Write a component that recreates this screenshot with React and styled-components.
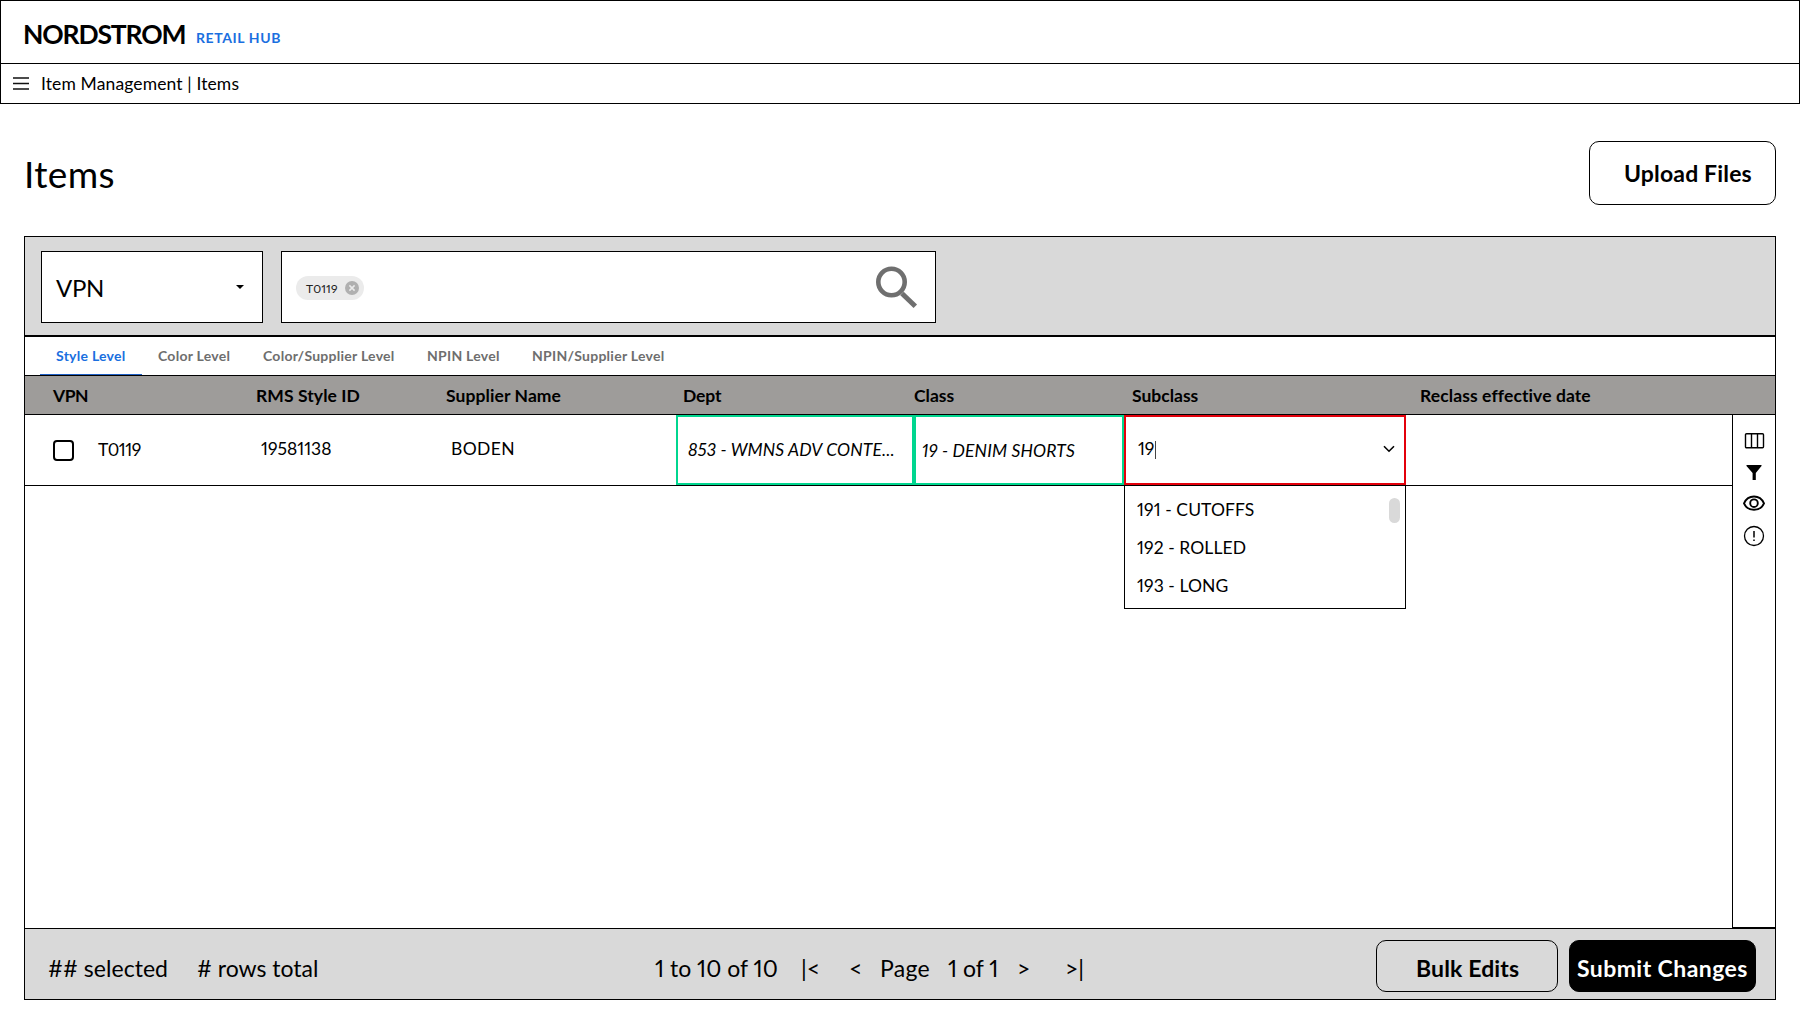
import React from "react";
import styled, { createGlobalStyle } from "styled-components";

const GlobalStyle = createGlobalStyle`
  * {
    box-sizing: border-box;
  }
  body {
    margin: 0;
    background: #fff;
    color: #000;
    font-family: Lato, "Open Sans", sans-serif;
    font-size: 17.5px;
    font-variant-numeric: proportional-nums;
  }
  button {
    font-family: inherit;
    color: inherit;
  }
`;

const Page = styled.div`
  width: 1800px;
  height: 1024px;
`;

const Text = styled.span`
  white-space: pre;
  letter-spacing: ${({ $ls }) => $ls || 0}px;
`;

/* header */
const Header = styled.header`
  height: 104px;
  border: 1px solid #000;
`;
const Brand = styled.div`
  height: 63px;
  border-bottom: 1px solid #000;
  padding: 3px 0 0 22px;
  display: flex;
  align-items: flex-start;
`;
const Logo = styled.span`
  width: 173px;
  line-height: 60px;
  font-size: 26.5px;
  font-weight: 700;
  letter-spacing: -1.15px;
`;
const Product = styled.span`
  padding-top: 5px;
  line-height: 58px;
  font-size: 14px;
  font-weight: 700;
  letter-spacing: 0.6px;
  color: #1a6fe0;
`;
const Crumbs = styled.nav`
  height: 39px;
  padding-left: 12px;
  display: flex;
  align-items: center;
  column-gap: 12px;
`;
const MenuIcon = styled.svg`
  width: 16px;
  height: 13px;
`;

/* title */
const TitleRow = styled.div`
  height: 132px;
  padding: 6px 24px 0 24px;
  display: flex;
  align-items: center;
  justify-content: space-between;
`;
const Title = styled.h1`
  margin: 0;
  font-size: 37px;
  font-weight: 400;
  letter-spacing: 0.4px;
`;
const Button = styled.button`
  height: ${({ $height }) => $height}px;
  width: ${({ $width }) => $width}px;
  padding: ${({ $pad }) => $pad};
  border: 1px solid #000;
  border-radius: 10px;
  background: ${({ $dark }) => ($dark ? "#000" : "transparent")};
  color: ${({ $dark }) => ($dark ? "#fff" : "#000")};
  font-size: 23px;
  font-weight: 700;
  letter-spacing: ${({ $ls }) => $ls}px;
  text-align: left;
  white-space: nowrap;
`;

/* panel */
const Panel = styled.main`
  margin-left: 24px;
  width: 1752px;
  height: 764px;
  border: 1px solid #000;
  display: flex;
  flex-direction: column;
`;
const SearchBar = styled.div`
  height: 100px;
  padding: 14px 16px 0;
  border-bottom: 2px solid #000;
  background: #d9d9d9;
  display: flex;
  column-gap: 18px;
`;
const Select = styled.div`
  width: 222px;
  height: 72px;
  padding: 0 18px 0 14px;
  border: 1px solid #000;
  background: #fff;
  display: flex;
  align-items: center;
  justify-content: space-between;
  font-size: 24px;
`;
const Caret = styled.span`
  border: 4.5px solid transparent;
  border-top-color: #000;
  border-bottom: 0;
`;
const SearchBox = styled.div`
  width: 655px;
  height: 72px;
  padding: 0 12px 0 14px;
  border: 1px solid #000;
  background: #fff;
  display: flex;
  align-items: center;
  justify-content: space-between;
`;
const Chip = styled.div`
  width: 68px;
  height: 24px;
  margin-top: 2px;
  padding: 0 5px 0 10px;
  border-radius: 12px;
  background: #ebebeb;
  color: #222;
  display: flex;
  align-items: center;
  justify-content: space-between;
  font-size: 12px;
`;

const Tabs = styled.div`
  height: 39px;
  padding-left: 15px;
  border-bottom: 1px solid #000;
  display: flex;
`;
const Tab = styled.div`
  width: ${({ $width }) => $width}px;
  padding-left: 16px;
  font-size: 14px;
  font-weight: 700;
  line-height: 38px;
  white-space: nowrap;
  letter-spacing: 0.26px;
  color: ${({ $active }) => ($active ? "#1a6fe0" : "#6e6e6e")};
  box-shadow: ${({ $active }) => ($active ? "inset 0 -1px #1f5fc4" : "none")};
`;

const columns = "228px 190px 233px 238px 210px 282px 1fr";

const HeadRow = styled.div`
  height: 39px;
  background: #9e9c9a;
  border-bottom: 1px solid #000;
  display: grid;
  grid-template-columns: ${columns};
  line-height: 40px;
  font-weight: 700;
`;
const HeadCell = styled.div`
  padding-left: ${({ $left }) => $left}px;
`;
const Body = styled.div`
  flex: 1;
  display: flex;
`;
const Rows = styled.div`
  flex: 1;
`;
const Row = styled.div`
  height: 71px;
  border-bottom: 1px solid #000;
  display: grid;
  grid-template-columns: ${columns};
`;
const Cell = styled.div`
  position: relative;
  height: 70px;
  padding-left: ${({ $left }) => $left}px;
  padding-bottom: ${({ $lift }) => $lift || 0}px;
  border: ${({ $outline }) => ($outline ? `2px solid ${$outline}` : "0")};
  font-style: ${({ $italic }) => ($italic ? "italic" : "normal")};
  display: flex;
  align-items: center;
`;
const Checkbox = styled.span`
  width: 21px;
  height: 21px;
  margin: 3px 24px 0 0;
  border: 2px solid #000;
  border-radius: 4px;
`;
const Cursor = styled.span`
  width: 1px;
  height: 18px;
  margin: 3px 0 0 1px;
  background: #444;
`;
const Chevron = styled.svg`
  width: 12px;
  height: 8px;
  margin: 0 9px 0 auto;
`;
const Menu = styled.ul`
  position: absolute;
  top: 68px;
  left: -2px;
  width: 282px;
  height: 124px;
  margin: 0;
  padding: 5px 0 0 12px;
  border: 1px solid #000;
  background: #fff;
  list-style: none;
  line-height: 38px;
`;
const Thumb = styled.span`
  position: absolute;
  top: 12px;
  right: 5px;
  width: 11px;
  height: 25px;
  border-radius: 6px;
  background: #d9d9d9;
`;
const Rail = styled.aside`
  width: 43px;
  padding-top: 18px;
  border-left: 1px solid #000;
  border-bottom: 1px solid #000;
  display: flex;
  flex-direction: column;
  align-items: center;
`;
const RailIcon = styled.svg`
  width: 22px;
  height: ${({ $height }) => $height}px;
  margin-bottom: ${({ $gap }) => $gap || 0}px;
`;

/* footer */
const Footer = styled.footer`
  height: 71px;
  padding: 0 19px 0 23px;
  border-top: 1px solid #000;
  background: #d9d9d9;
  display: flex;
  font-size: 23px;
`;
const FootText = styled.div`
  width: ${({ $width }) => $width}px;
  padding-top: 25px;
  line-height: 28px;
  white-space: nowrap;
  letter-spacing: ${({ $ls }) => $ls || 0}px;
`;
const Actions = styled.div`
  margin-left: auto;
  padding-top: 11px;
  display: flex;
  column-gap: 11px;
`;

const tabs = [
  { label: "Style Level", width: 102, active: true },
  { label: "Color Level", width: 105 },
  { label: "Color/Supplier Level", width: 164 },
  { label: "NPIN Level", width: 105 },
  { label: "NPIN/Supplier Level", width: 164 },
];

const heads = [
  { label: "VPN", left: 28, ls: -0.5 },
  { label: "RMS Style ID", left: 3, ls: 0.08 },
  { label: "Supplier Name", left: 3, ls: 0.09 },
  { label: "Dept", left: 7, ls: -0.1 },
  { label: "Class", left: 0, ls: 0 },
  { label: "Subclass", left: 8, ls: 0 },
  { label: "Reclass effective date", left: 14, ls: 0.1 },
];

const options = ["191 - CUTOFFS", "192 - ROLLED", "193 - LONG"];

const SubclassCell = () => (
  <Cell $left={12} $lift={3} $outline="#e3000b">
    <Text $ls={-0.3}>19</Text>
    <Cursor />
    <Chevron viewBox="0 0 12 8">
      <path d="M1 1.2l5 5 5-5" fill="none" stroke="#000" strokeWidth="1.6" />
    </Chevron>
    <Menu>
      {options.map((option) => (
        <li key={option}>
          <Text $ls={0.08}>{option}</Text>
        </li>
      ))}
      <Thumb />
    </Menu>
  </Cell>
);

const App = () => {
  return (
    <Page>
      <GlobalStyle />
      <Header>
        <Brand>
          <Logo>NORDSTROM</Logo>
          <Product>RETAIL HUB</Product>
        </Brand>
        <Crumbs>
          <MenuIcon viewBox="0 0 16 13">
            <path d="M0 1h16M0 6.5h16M0 12h16" stroke="#111" strokeWidth="1.6" />
          </MenuIcon>
          <Text $ls={0.12}>Item Management | Items</Text>
        </Crumbs>
      </Header>

      <TitleRow>
        <Title>Items</Title>
        <Button $height={64} $width={187} $pad="0 0 0 34px" $ls={0.16}>
          Upload Files
        </Button>
      </TitleRow>

      <Panel>
        <SearchBar>
          <Select>
            <Text $ls={-0.3}>VPN</Text>
            <Caret />
          </Select>
          <SearchBox>
            <Chip>
              <Text $ls={0.1}>T0119</Text>
              <svg width="14" height="14" viewBox="0 0 14 14">
                <circle cx="7" cy="7" r="7" fill="#b0b0b0" />
                <path d="M4.4 4.4l5.2 5.2M9.6 4.4L4.4 9.6" stroke="#ebebeb" strokeWidth="1.5" />
              </svg>
            </Chip>
            <svg width="53" height="53" viewBox="0 0 53 53" fill="none" stroke="#6f6f6f">
              <circle cx="21.5" cy="21" r="13.2" strokeWidth="4.6" />
              <path d="M32 32.5L45.3 45.3" strokeWidth="5" />
            </svg>
          </SearchBox>
        </SearchBar>

        <Tabs>
          {tabs.map((tab) => (
            <Tab key={tab.label} $width={tab.width} $active={tab.active}>
              {tab.label}
            </Tab>
          ))}
        </Tabs>

        <HeadRow>
          {heads.map((head) => (
            <HeadCell key={head.label} $left={head.left}>
              <Text $ls={head.ls}>{head.label}</Text>
            </HeadCell>
          ))}
        </HeadRow>

        <Body>
          <Rows>
            <Row>
              <Cell $left={28} $lift={2}>
                <Checkbox />
                <Text $ls={-0.5}>T0119</Text>
              </Cell>
              <Cell $left={8} $lift={3}>
                <Text>19581138</Text>
              </Cell>
              <Cell $left={8} $lift={3}>
                <Text $ls={0.4}>BODEN</Text>
              </Cell>
              <Cell $left={10} $lift={2} $outline="#00d68f" $italic>
                <Text $ls={0.13}>853 - WMNS ADV CONTE...</Text>
              </Cell>
              <Cell $left={6} $outline="#00d68f" $italic>
                <Text $ls={0.15}>19 - DENIM SHORTS</Text>
              </Cell>
              <SubclassCell />
              <Cell />
            </Row>
          </Rows>
          <Rail>
            <RailIcon $height={16} $gap={15} viewBox="0 0 22 16" fill="none" stroke="#000">
              <rect x="2.5" y="0.7" width="18" height="14" rx="1" strokeWidth="1.4" />
              <path d="M8.5 1v14M14.5 1v14" strokeWidth="1.4" />
            </RailIcon>
            <RailIcon $height={16} $gap={15} viewBox="0 0 22 16">
              <path d="M3.5 1h15v1L12.8 9V16H9.6V9L3.5 2z" />
            </RailIcon>
            <RailIcon $height={16} $gap={14} viewBox="0 0 22 16" fill="none" stroke="#000">
              <path d="M1 8.3C3 3.9 6.6 1.5 11 1.5S19 3.9 21 8.3c-2 4.4-5.6 6.5-10 6.5S3 12.7 1 8.3z" strokeWidth="1.9" />
              <circle cx="11" cy="8.2" r="3.8" strokeWidth="1.9" />
            </RailIcon>
            <RailIcon $height={22} viewBox="0 0 22 22" fill="none" stroke="#000">
              <circle cx="11" cy="11" r="9.5" strokeWidth="1.3" />
              <path d="M11 6v6.5M11 14.4v1.6" strokeWidth="1.5" />
            </RailIcon>
          </Rail>
        </Body>

        <Footer>
          <FootText $width={149} $ls={0.05}>
            ## selected
          </FootText>
          <FootText $width={458}>
            # rows total
          </FootText>
          <FootText $width={146}>
            1 to 10 of 10
          </FootText>
          <FootText $width={48}>{"|<"}</FootText>
          <FootText $width={31}>{"<"}</FootText>
          <FootText $width={68} $ls={0.3}>
            Page
          </FootText>
          <FootText $width={69}>
            1 of 1
          </FootText>
          <FootText $width={48}>{">"}</FootText>
          <FootText $width={40}>{">|"}</FootText>
          <Actions>
            <Button $height={52} $width={182} $pad="4px 0 0 39px" $ls={0.14}>
              Bulk Edits
            </Button>
            <Button $height={52} $width={187} $pad="4px 0 0 7px" $ls={0.42} $dark>
              Submit Changes
            </Button>
          </Actions>
        </Footer>
      </Panel>
    </Page>
  );
};

export default App;
